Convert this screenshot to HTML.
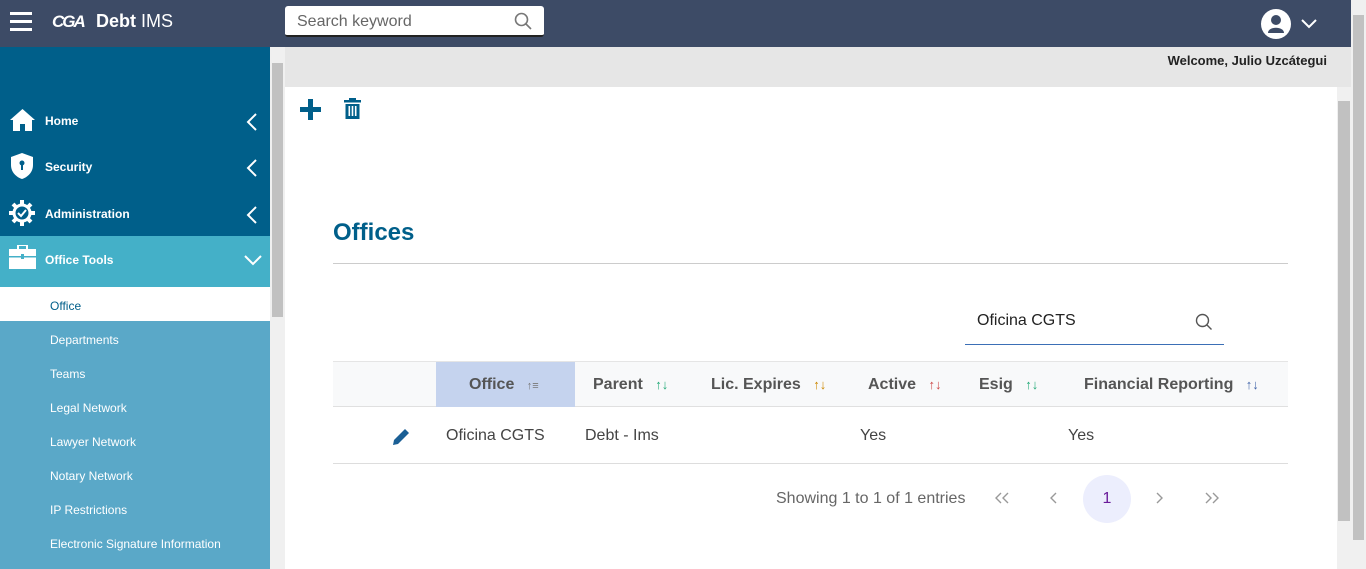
<!DOCTYPE html>
<html><head><meta charset="utf-8"><style>
*{box-sizing:border-box;margin:0;padding:0}
body{width:1366px;height:569px;overflow:hidden;font-family:"Liberation Sans",sans-serif;background:#fff;position:relative}
.hdr{position:absolute;left:0;top:0;width:1351px;height:47px;background:#3d4b66}
.side{position:absolute;left:0;top:47px;width:270px;height:522px;background:#5aa8c8}
.nav{position:absolute;left:0;width:270px;color:#fff;font-size:12px;font-weight:bold}
.nav span{position:absolute;left:45px;top:1px}
.sub{position:absolute;left:50px;color:#fff;font-size:12px}
.chev{position:absolute;left:246px}
.ar{font-size:13px;margin-left:8px;font-weight:normal}
</style></head><body>
<div class="hdr">
 <div style="position:absolute;left:10px;top:12px;width:22px;height:3px;background:#fff;box-shadow:0 8px 0 #fff,0 16px 0 #fff"></div>
 <div style="position:absolute;left:52px;top:12px;color:#fff;font-size:17px;font-weight:bold;letter-spacing:-2px;font-style:italic">CGA</div>
 <div style="position:absolute;left:96px;top:11px;color:#fff;font-size:18px"><b>Debt</b> IMS</div>
 <div style="position:absolute;left:285px;top:6px;width:259px;height:31px;background:#fff;border-radius:3px;border-bottom:2px solid #222">
  <span style="position:absolute;left:12px;top:7px;font-size:16px;color:#666">Search keyword</span>
  <svg style="position:absolute;left:229px;top:6px" width="18" height="18" viewBox="0 0 18 18"><circle cx="7.5" cy="7.5" r="6" fill="none" stroke="#777" stroke-width="1.6"/><path d="M12 12l5 5" stroke="#777" stroke-width="1.6"/></svg>
 </div>
 <svg style="position:absolute;left:1261px;top:9px" width="30" height="30" viewBox="0 0 30 30"><circle cx="15" cy="15" r="15" fill="#fff"/><circle cx="15" cy="11" r="5" fill="#3d4b66"/><path d="M7 24c0-7 16-7 16 0z" fill="#3d4b66"/></svg>
 <svg style="position:absolute;left:1300px;top:18px" width="18" height="12" viewBox="0 0 18 12"><path d="M2 2l7 7 7-7" fill="none" stroke="#fff" stroke-width="2"/></svg>
</div>
<div class="side">
 <div style="position:absolute;left:0;top:0;width:270px;height:189px;background:#005f8a"></div>
 <div style="position:absolute;left:0;top:189px;width:270px;height:51px;background:#44b0c8"></div>
 <div style="position:absolute;left:0;top:240px;width:270px;height:34px;background:#fff"></div>
</div>
<div class="nav" style="top:113px">
 <svg style="position:absolute;left:10px;top:-4px" width="25" height="22" viewBox="0 0 25 22"><path d="M12.5 0L0 11h3v11h7v-7h5v7h7V11h3z" fill="#fff"/></svg><span>Home</span>
 <svg class="chev" style="top:0" width="12" height="18" viewBox="0 0 12 18"><path d="M10 1L2 9l8 8" fill="none" stroke="#fff" stroke-width="2"/></svg></div>
<div class="nav" style="top:159px">
 <svg style="position:absolute;left:11px;top:-6px" width="22" height="26" viewBox="0 0 22 26"><path d="M11 0L0 4v8c0 7 5 12 11 14 6-2 11-7 11-14V4z" fill="#fff"/><circle cx="11" cy="10" r="2.5" fill="#005f8a"/><rect x="10" y="11" width="2" height="6" fill="#005f8a"/></svg><span>Security</span>
 <svg class="chev" style="top:0" width="12" height="18" viewBox="0 0 12 18"><path d="M10 1L2 9l8 8" fill="none" stroke="#fff" stroke-width="2"/></svg></div>
<div class="nav" style="top:206px">
 <svg style="position:absolute;left:9px;top:-6px" width="26" height="26" viewBox="0 0 26 26"><circle cx="13" cy="13" r="8" fill="none" stroke="#fff" stroke-width="3"/><g stroke="#fff" stroke-width="4"><path d="M13 0v5M13 21v5M0 13h5M21 13h5M4 4l3 3M19 19l3 3M22 4l-3 3M4 22l3-3"/></g><path d="M9 13l3 3 5-6" fill="none" stroke="#fff" stroke-width="2"/></svg><span>Administration</span>
 <svg class="chev" style="top:0" width="12" height="18" viewBox="0 0 12 18"><path d="M10 1L2 9l8 8" fill="none" stroke="#fff" stroke-width="2"/></svg></div>
<div class="nav" style="top:252px">
 <svg style="position:absolute;left:9px;top:-7px" width="27" height="24" viewBox="0 0 27 24"><rect x="9" y="0" width="9" height="5" fill="none" stroke="#fff" stroke-width="2"/><rect x="0" y="4" width="27" height="20" fill="#fff"/><rect x="0" y="11" width="27" height="1.5" fill="#44b0c8"/><rect x="12" y="9" width="3" height="5" fill="#44b0c8"/></svg><span>Office Tools</span>
 <svg style="position:absolute;left:244px;top:2px" width="18" height="12" viewBox="0 0 18 12"><path d="M1 2l8 8 8-8" fill="none" stroke="#fff" stroke-width="2"/></svg></div>
<div class="sub" style="top:299px;color:#005f8a">Office</div>
<div class="sub" style="top:333px">Departments</div>
<div class="sub" style="top:367px">Teams</div>
<div class="sub" style="top:401px">Legal Network</div>
<div class="sub" style="top:435px">Lawyer Network</div>
<div class="sub" style="top:469px">Notary Network</div>
<div class="sub" style="top:503px">IP Restrictions</div>
<div class="sub" style="top:537px">Electronic Signature Information</div>
<div style="position:absolute;left:270px;top:47px;width:15px;height:522px;background:#f0f0f0"><div style="position:absolute;left:2px;top:16px;width:11px;height:254px;background:#c1c1c1"></div></div>
<div style="position:absolute;left:285px;top:47px;width:1066px;height:40px;background:#e6e6e6"><span style="position:absolute;right:24px;top:6px;font-size:13px;font-weight:bold;color:#222">Welcome, Julio Uzcátegui</span></div>
<div style="position:absolute;left:1337px;top:87px;width:14px;height:482px;background:#f0f0f0"><div style="position:absolute;left:1px;top:14px;width:12px;height:420px;background:#c1c1c1"></div></div>
<div style="position:absolute;left:1351px;top:0;width:15px;height:569px;background:#f0f0f0"><div style="position:absolute;left:2px;top:15px;width:11px;height:525px;background:#c1c1c1"></div></div>
<svg style="position:absolute;left:300px;top:99px" width="21" height="21" viewBox="0 0 21 21"><path d="M8 0h5v8h8v5h-8v8H8v-8H0V8h8z" fill="#005f8a"/></svg>
<svg style="position:absolute;left:344px;top:98px" width="17" height="21" viewBox="0 0 17 21"><rect x="0" y="2" width="17" height="2.5" fill="#005f8a"/><rect x="5" y="0" width="7" height="3" fill="#005f8a"/><path d="M1.5 6h14v15h-14z" fill="#005f8a"/><g fill="#fff"><rect x="4.5" y="8" width="1.6" height="10"/><rect x="7.7" y="8" width="1.6" height="10"/><rect x="10.9" y="8" width="1.6" height="10"/></g></svg>
<div style="position:absolute;left:333px;top:219px;font-size:24px;color:#005f8a;font-weight:bold">Offices</div>
<div style="position:absolute;left:333px;top:263px;width:955px;height:1px;background:#ccc"></div>
<div style="position:absolute;left:965px;top:297px;width:259px;height:48px;border-bottom:1px solid #3b6fb6"><span style="position:absolute;left:12px;top:15px;font-size:16px;color:#222">Oficina CGTS</span>
<svg style="position:absolute;left:230px;top:16px" width="18" height="18" viewBox="0 0 18 18"><circle cx="7.5" cy="7.5" r="6" fill="none" stroke="#555" stroke-width="1.4"/><path d="M12 12l4.5 4.5" stroke="#555" stroke-width="1.4"/></svg></div>
<div style="position:absolute;left:333px;top:361px;width:955px;height:46px;background:#f8f9fa;border-top:1px solid #e5e5e5;border-bottom:1px solid #e0e0e0;font-size:16px;font-weight:bold;color:#555">
 <div style="position:absolute;left:103px;top:0;width:139px;height:45px;background:#c5d3ee"></div>
 <span style="position:absolute;left:136px;top:14px">Office <span class="ar" style="font-size:11px;color:#777">↑≡</span></span>
 <span style="position:absolute;left:260px;top:14px">Parent <span class="ar" style="color:#2a7">↑↓</span></span>
 <span style="position:absolute;left:378px;top:14px">Lic. Expires <span class="ar" style="color:#c80">↑↓</span></span>
 <span style="position:absolute;left:535px;top:14px">Active <span class="ar" style="color:#c44">↑↓</span></span>
 <span style="position:absolute;left:646px;top:14px">Esig <span class="ar" style="color:#2a7">↑↓</span></span>
 <span style="position:absolute;left:751px;top:14px">Financial Reporting <span class="ar" style="color:#46a">↑↓</span></span>
</div>
<div style="position:absolute;left:333px;top:407px;width:955px;height:57px;border-bottom:1px solid #ddd;font-size:16px;color:#444">
 <svg style="position:absolute;left:59px;top:20px" width="19" height="19" viewBox="0 0 19 19"><path d="M1 18l1-5L13 2l4 4L6 17z" fill="#1a5f95"/></svg>
 <span style="position:absolute;left:113px;top:20px">Oficina CGTS</span>
 <span style="position:absolute;left:252px;top:20px">Debt - Ims</span>
 <span style="position:absolute;left:527px;top:20px">Yes</span>
 <span style="position:absolute;left:735px;top:20px">Yes</span>
</div>
<div style="position:absolute;left:776px;top:490px;font-size:16px;color:#666">Showing 1 to 1 of 1 entries</div>
<svg style="position:absolute;left:994px;top:492px" width="16" height="12" viewBox="0 0 16 12"><path d="M7 1L2 6l5 5M14 1L9 6l5 5" fill="none" stroke="#999" stroke-width="1.4"/></svg>
<svg style="position:absolute;left:1049px;top:492px" width="10" height="12" viewBox="0 0 10 12"><path d="M7 1L2 6l5 5" fill="none" stroke="#999" stroke-width="1.4"/></svg>
<div style="position:absolute;left:1083px;top:475px;width:48px;height:48px;border-radius:50%;background:#eceefd;color:#6a1b9a;font-size:16px;text-align:center;line-height:48px">1</div>
<svg style="position:absolute;left:1155px;top:492px" width="10" height="12" viewBox="0 0 10 12"><path d="M2 1l5 5-5 5" fill="none" stroke="#999" stroke-width="1.4"/></svg>
<svg style="position:absolute;left:1204px;top:492px" width="16" height="12" viewBox="0 0 16 12"><path d="M2 1l5 5-5 5M9 1l5 5-5 5" fill="none" stroke="#999" stroke-width="1.4"/></svg>
</body></html>
